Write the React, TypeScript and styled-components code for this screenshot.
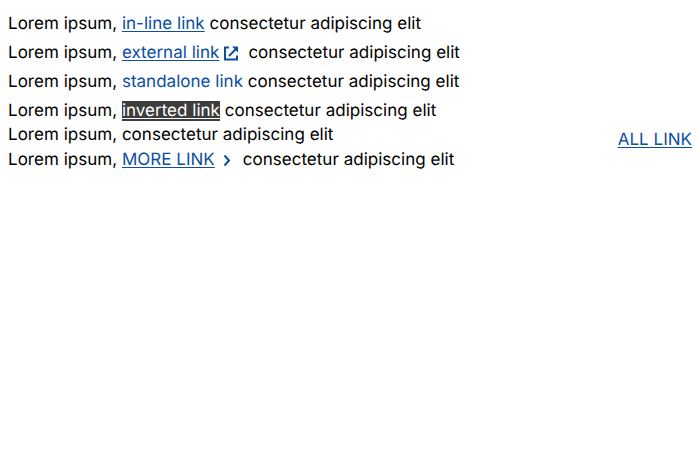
import React from "react";
import styled, { createGlobalStyle } from "styled-components";

const Global = createGlobalStyle`
  html, body { margin: 0; padding: 0; background: #fff; }
  body {
    font-family: Inter, "Liberation Sans", sans-serif;
    font-size: 17px;
    line-height: 24px;
    color: #000;
    text-rendering: geometricPrecision;
    letter-spacing: 0.02px;
  }
`;

const Page = styled.main`
  display: flex;
  flex-direction: column;
  padding: 12px 8px 0;
`;

const Line = styled.p<{ $height: number }>`
  margin: 0;
  height: ${(p) => p.$height}px;
  line-height: 24px;
  white-space: nowrap;
`;

const Footer = styled.div`
  display: flex;
  justify-content: space-between;
  align-items: flex-start;
`;

const Lines = styled.div`
  display: flex;
  flex-direction: column;
`;

const TextLink = styled.a`
  color: #0b4ea2;
  text-decoration: underline;
  text-underline-offset: 2px;
  text-decoration-thickness: 1px;
`;

const Standalone = styled(TextLink)`
  text-decoration: none;
`;

const Inverted = styled(TextLink)`
  color: #fff;
  background: #3d3d3d;
`;

const AllLink = styled(TextLink)`
  margin-top: 5px;
  line-height: 24px;
`;

const IconSlot = styled.svg`
  display: inline-block;
  vertical-align: -3px;
`;

const ExternalIcon = styled(IconSlot)`
  margin: 0 9px 0 4px;
`;

const ChevronIcon = styled(IconSlot)`
  margin: 0 10px 0 6px;
`;

export default function App() {
  return (
    <Page>
      <Global />
      <Line $height={29}>
        Lorem ipsum, <TextLink href="#">in-line link</TextLink> consectetur adipiscing elit
      </Line>
      <Line $height={29}>
        Lorem ipsum, <TextLink href="#">external link</TextLink>
        <ExternalIcon width="16" height="16" viewBox="0 0 16 16" fill="none" stroke="#0b4ea2" strokeWidth="2">
          <path d="M6 2.5H2v12h12v-4" />
          <path d="M6 11l7-7" />
          <path d="M9 1.5h6v6z" fill="#0b4ea2" stroke="none" />
        </ExternalIcon>
        consectetur adipiscing elit
      </Line>
      <Line $height={29}>
        Lorem ipsum, <Standalone href="#">standalone link</Standalone> consectetur adipiscing elit
      </Line>
      <Line $height={24}>
        Lorem ipsum, <Inverted href="#">inverted link</Inverted> consectetur adipiscing elit
      </Line>
      <Footer>
        <Lines>
          <Line $height={25}>Lorem ipsum, consectetur adipiscing elit</Line>
          <Line $height={24}>
            Lorem ipsum, <TextLink href="#">MORE LINK</TextLink>
            <ChevronIcon width="12" height="16" viewBox="0 0 12 16" fill="none" stroke="#0b4ea2" strokeWidth="2">
              <path d="M3.5 3.5L8 8.5L3.5 13.5" />
            </ChevronIcon>
            consectetur adipiscing elit
          </Line>
        </Lines>
        <AllLink href="#">ALL LINK</AllLink>
      </Footer>
    </Page>
  );
}
